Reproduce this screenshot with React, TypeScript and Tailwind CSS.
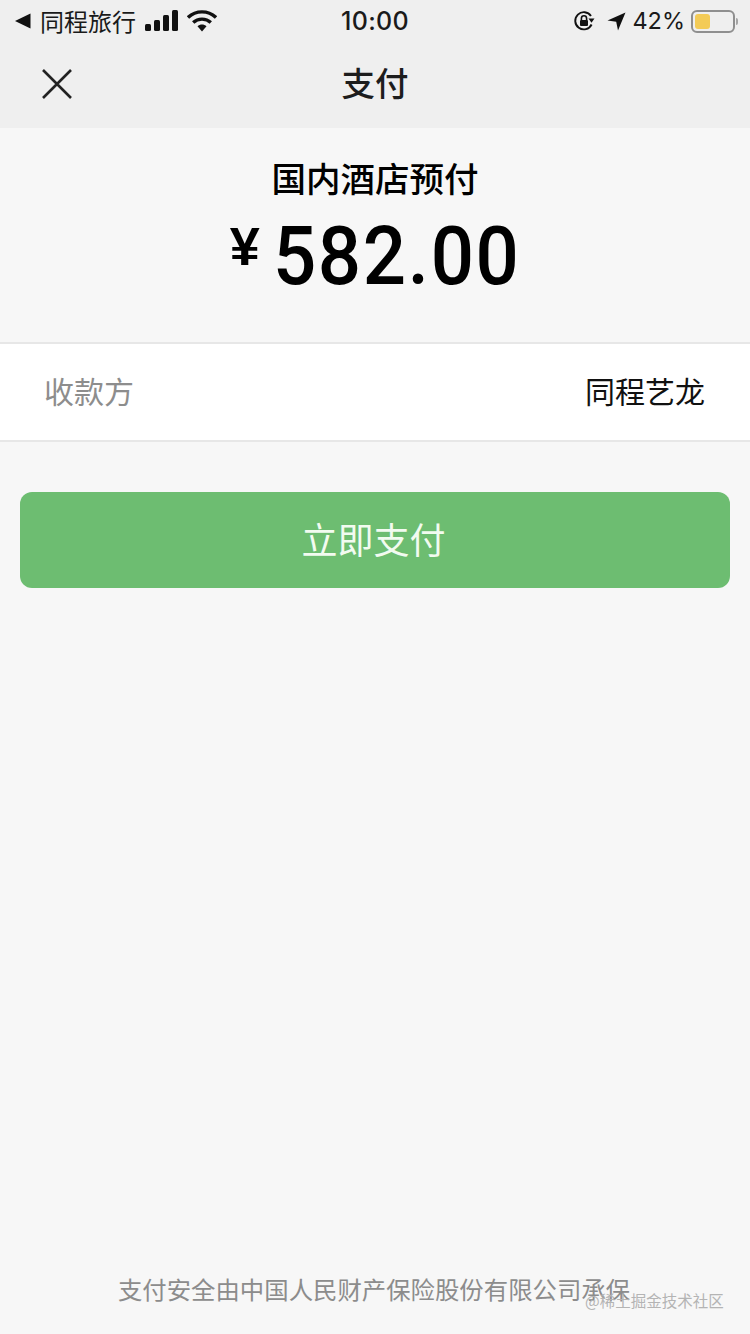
const cjk = { fontFamily: '"Noto Sans CJK SC","Liberation Sans",sans-serif' };

function Signal() {
  return (
    <svg width="36" height="22" viewBox="0 0 36 22" className="block shrink-0">
      <rect x="1" y="14" width="6" height="7" rx="1.5" fill="#111" />
      <rect x="10" y="10" width="6" height="11" rx="1.5" fill="#111" />
      <rect x="19" y="5" width="6" height="16" rx="1.5" fill="#111" />
      <rect x="28" y="0" width="6" height="21" rx="1.5" fill="#111" />
    </svg>
  );
}

function Wifi() {
  return (
    <svg width="30" height="22" viewBox="0 0 30 22" className="block shrink-0">
      <path d="M1 7.5C9 0 21 0 29 7.5" fill="none" stroke="#111" strokeWidth="3.4" />
      <path d="M6.2 12.5C11 8 19 8 23.8 12.5" fill="none" stroke="#111" strokeWidth="3.4" />
      <path d="M10.5 16.2C13 14 17 14 19.5 16.2L15 21.5Z" fill="#111" />
    </svg>
  );
}

function RotationLock() {
  return (
    <svg width="22" height="22" viewBox="0 0 22 22" className="block shrink-0">
      <path d="M18.6 14.5A8.6 8.6 0 1 1 18 6" fill="none" stroke="#111" strokeWidth="1.9" />
      <path d="M15.5 8.5h6l-3 4.2Z" fill="#111" />
      <path d="M8.4 10V8.4a2.6 2.6 0 0 1 5.2 0V10" fill="none" stroke="#111" strokeWidth="1.6" />
      <rect x="7" y="10" width="8" height="6" rx="1" fill="#111" />
    </svg>
  );
}

function LocationArrow() {
  return (
    <svg width="19" height="19" viewBox="0 0 19 19" className="block shrink-0">
      <path d="M18.5 0.5L0.5 8.6L9.2 9.8L11 18.5Z" fill="#111" />
    </svg>
  );
}

function Battery() {
  return (
    <div className="flex shrink-0 items-center">
      <div className="h-[23px] w-[44px] rounded-[6px] border-2 border-[#8f8f8f] p-[2px]">
        <div className="h-full w-[15px] rounded-[3px] bg-[#f3cb57]" />
      </div>
      <div className="ml-[1px] h-[7px] w-[2px] rounded-r-full bg-[#a5a5a5]" />
    </div>
  );
}

export default function App() {
  return (
    <div className="relative flex h-[1334px] w-[750px] flex-col overflow-hidden bg-[#f7f7f7] text-black" style={cjk}>
      <header className="h-[128px] bg-[#efefef]">
        <div className="grid h-[42px] grid-cols-[1fr_auto_1fr] items-center pl-[15px] pr-[12px] text-[#1a1a1a]">
          <div className="flex items-center">
            <svg width="16" height="16" viewBox="0 0 16 16" className="block shrink-0">
              <path d="M0 8L15.5 0.5V15.5Z" fill="#111" />
            </svg>
            <span className="ml-[9px] text-[24px] leading-none">同程旅行</span>
            <div className="ml-[8px]"><Signal /></div>
            <div className="ml-[7px]"><Wifi /></div>
          </div>
          <span className="pr-[3px] text-[25px] font-medium leading-none tracking-[0.3px]" style={{ fontFamily: '"Inter","Liberation Sans",sans-serif' }}>10:00</span>
          <div className="flex items-center justify-end">
            <RotationLock />
            <div className="ml-[12px]"><LocationArrow /></div>
            <span className="ml-[6px] text-[23.5px] leading-none" style={{ fontFamily: '"Inter","Liberation Sans",sans-serif' }}>42%</span>
            <div className="ml-[6px]"><Battery /></div>
          </div>
        </div>
        <div className="relative flex h-[84px] items-center justify-center pb-[4px]">
          <svg width="32" height="32" viewBox="0 0 32 32" className="absolute left-[41px] top-[26px]">
            <path d="M2 2L30 30M30 2L2 30" stroke="#222" strokeWidth="2.6" fill="none" />
          </svg>
          <span className="text-[33.5px] font-medium leading-none text-[#1d1d1d]">支付</span>
        </div>
      </header>

      <section className="flex h-[215px] flex-col items-center">
        <h1 className="mt-[30px] text-[34.5px] font-medium leading-[38px]">国内酒店预付</h1>
        <div className="mt-[15px] flex items-center pl-[8px] leading-none">
          <span className="mr-[5px] mt-[-22px] text-[54px] font-bold leading-none" style={{ fontFamily: '"Liberation Sans",sans-serif' }}>¥</span>
          <span className="origin-center scale-x-[0.94] text-[81px] font-medium leading-[92px] tracking-[1.8px]" style={{ fontFamily: '"Roboto","Liberation Sans",sans-serif' }}>582.00</span>
        </div>
      </section>

      <div className="mt-[-1px] flex h-[100px] items-center justify-between border-y-2 border-[#e7e7e7] bg-white pb-[5px] pl-[44px] pr-[45px] text-[30px] leading-none">
        <span className="text-[#8d8d8d]">收款方</span>
        <span className="text-[#111]">同程艺龙</span>
      </div>

      <button className="mx-[20px] mt-[50px] flex h-[96px] items-center justify-center rounded-[12px] bg-[#6dbd71] pb-[5px] pr-[3px] text-[36px] leading-none text-[#f2fbf0]">
        立即支付
      </button>

      <footer className="mt-auto flex justify-center pb-[29px] pr-[2px] text-[24.4px] leading-[32px] text-[#8c8c8c]">
        <span>支付安全由中国人民财产保险股份有限公司承保</span>
      </footer>

      <span className="absolute left-[585px] top-[1290px] text-[15.5px] leading-[20px] text-[#b4b4b4]">@稀土掘金技术社区</span>
    </div>
  );
}
